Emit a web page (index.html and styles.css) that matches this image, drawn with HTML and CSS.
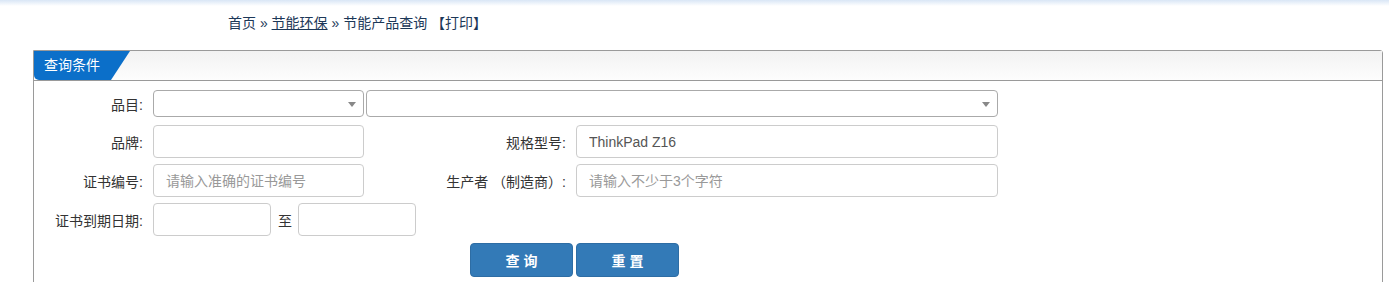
FILE: index.html
```html
<!DOCTYPE html>
<html lang="zh-CN">
<head>
<meta charset="utf-8">
<title>节能产品查询</title>
<link rel="stylesheet" href="styles.css">
</head>
<body>
<div class="topbar"></div>
<div class="crumbs">首页 » <a href="#" class="crumb-link">节能环保</a> » 节能产品查询 <span class="print">【打印】</span></div>
<div class="panel">
  <div class="panel-head">
    <div class="tab">查询条件</div>
  </div>
  <div class="panel-body">
    <div class="form-grid">
      <label class="lbl first">品目:</label>
      <div class="sel first"><select class="sel-el"><option></option></select><span class="caret"></span></div>
      <div class="sel first wide"><select class="sel-el"><option></option></select><span class="caret"></span></div>

      <label class="lbl">品牌:</label>
      <input class="inp" type="text">
      <label class="lbl">规格型号:</label>
      <input class="inp" type="text" value="ThinkPad Z16">

      <label class="lbl">证书编号:</label>
      <input class="inp" type="text" placeholder="请输入准确的证书编号">
      <label class="lbl">生产者 （制造商）:</label>
      <input class="inp" type="text" placeholder="请输入不少于3个字符">

      <label class="lbl">证书到期日期:</label>
      <div class="range">
        <input class="inp date" type="text">
        <span class="to">至</span>
        <input class="inp date" type="text">
      </div>

      <div class="actions">
        <button class="btn" type="button">查询</button>
        <button class="btn" type="button">重置</button>
      </div>
    </div>
  </div>
</div>
</body>
</html>
```
FILE: styles.css
```css
html, body {
  margin: 0;
  padding: 0;
  background: #fff;
}
body {
  font-family: "Liberation Sans", "Noto Sans CJK SC", sans-serif;
  font-size: 14px;
  color: #333;
  height: 282px;
  overflow: hidden;
}
.topbar {
  height: 6px;
  background: linear-gradient(to bottom, #d9e6f6, #ffffff);
}
.crumbs {
  padding-left: 228px;
  margin-top: 8px;
  height: 18px;
  line-height: 18px;
  font-size: 14px;
  color: #1c3858;
}
.crumb-link {
  color: #1c3858;
  text-decoration: underline;
}
.panel {
  margin: 18px 0 0 33px;
  width: 1348px;
  border: 1px solid #9a9a9a;
  border-radius: 0 3px 0 0;
  height: 231px;
}
.panel-head {
  height: 29px;
  border-bottom: 1px solid #9a9a9a;
  background: linear-gradient(to bottom, #f2f2f2, #fdfdfd);
  display: flex;
}
.tab {
  width: 96px;
  height: 29px;
  background: #0b6fc9;
  color: #fff;
  font-size: 14px;
  line-height: 29px;
  padding-left: 10px;
  box-sizing: border-box;
  border-radius: 0 0 0 5px;
  clip-path: polygon(0 0, 100% 0, calc(100% - 19px) 100%, 0 100%);
}
.panel-body {
  padding-top: 9px;
}
.form-grid {
  display: grid;
  grid-template-columns: 119px 211px 212px 422px;
  row-gap: 6px;
  align-items: center;
}
.lbl {
  text-align: right;
  padding-right: 10px;
  color: #333;
  white-space: nowrap;
}
.first {
  margin-bottom: 2px;
}
.sel {
  position: relative;
  height: 27px;
}
.sel.wide {
  grid-column: 3 / 5;
  margin-left: 2px;
}
.sel-el {
  appearance: none;
  -webkit-appearance: none;
  width: 100%;
  height: 27px;
  box-sizing: border-box;
  border: 1px solid #aaa;
  border-radius: 4px;
  background: #fff;
  margin: 0;
  padding: 0 8px;
  font: inherit;
}
.caret {
  position: absolute;
  right: 8px;
  top: 12px;
  width: 0;
  height: 0;
  border-left: 4px solid transparent;
  border-right: 4px solid transparent;
  border-top: 5px solid #888;
}
.inp {
  height: 33px;
  box-sizing: border-box;
  border: 1px solid #ccc;
  border-radius: 4px;
  padding: 0 12px;
  margin: 0;
  font-family: "Liberation Sans", "Noto Sans CJK SC", sans-serif;
  font-size: 14px;
  color: #555;
  background: #fff;
  width: 100%;
}
.inp::placeholder {
  color: #999;
}
.range {
  grid-column: 2 / 4;
  display: flex;
  align-items: center;
}
.inp.date {
  width: 118px;
}
.to {
  margin: 0 6px 0 7px;
  color: #333;
}
.actions {
  grid-column: 1 / -1;
  display: flex;
  gap: 3px;
  padding-left: 436px;
  margin-top: 1px;
}
.btn {
  width: 103px;
  height: 34px;
  background: #337ab7;
  border: 1px solid #2e6da4;
  border-radius: 4px;
  color: #fff;
  font-family: "Noto Sans CJK SC", sans-serif;
  font-size: 14px;
  font-weight: bold;
  letter-spacing: 4px;
  text-indent: 4px;
  padding: 0;
}
```
